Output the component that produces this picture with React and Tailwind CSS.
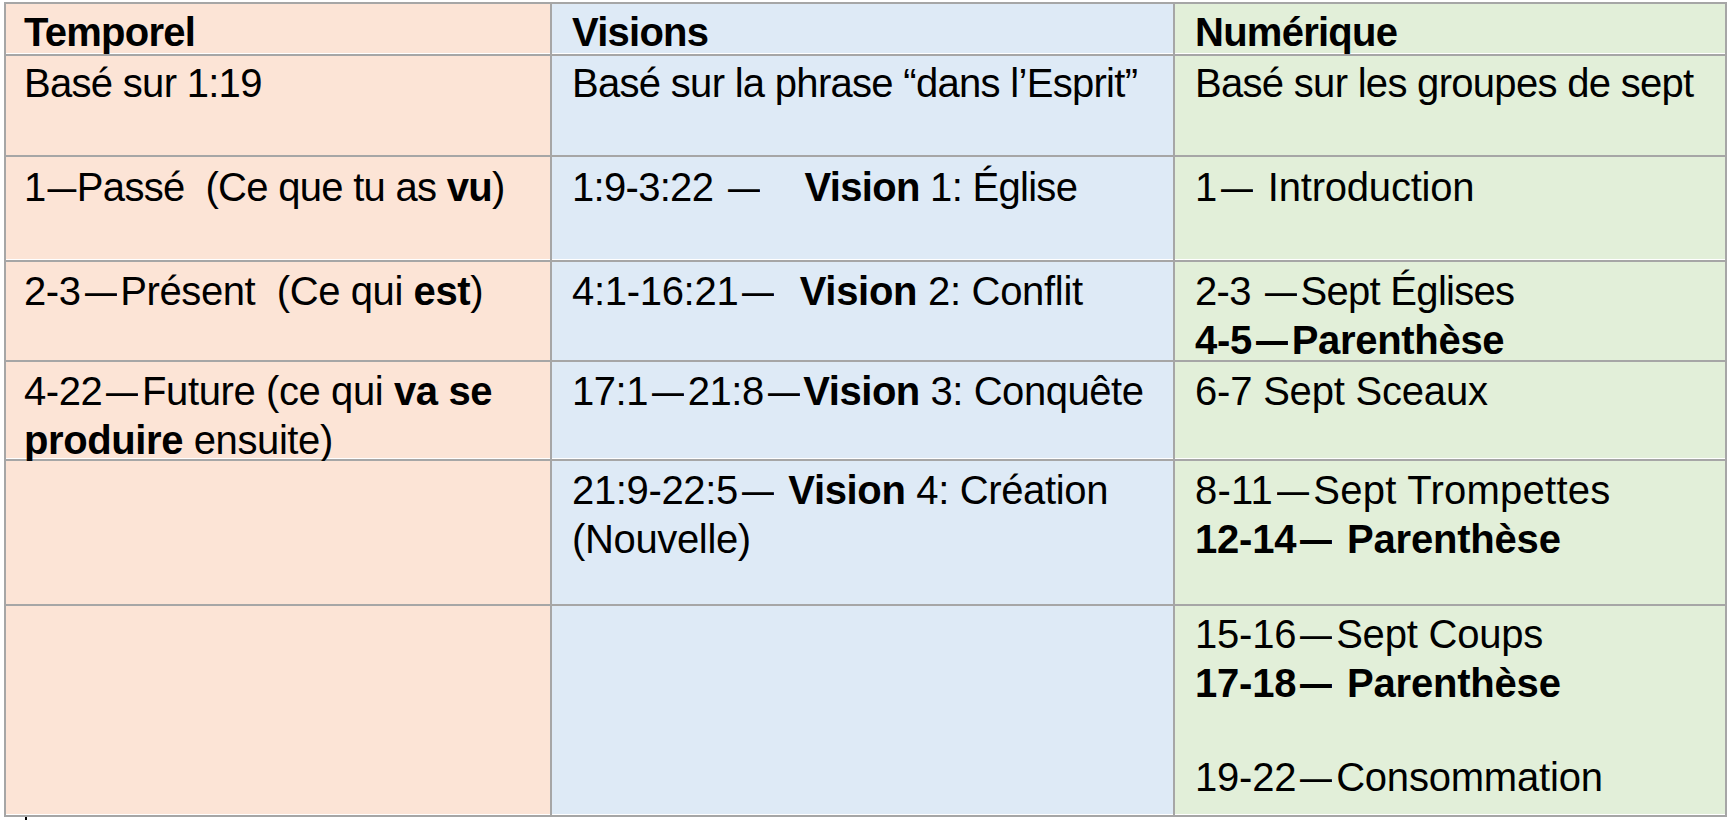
import React from "react";

const B = ({ children }) => <span className="font-bold">{children}</span>;
// narrow dash (advance ~0.8em)
const D = () => (
  <span className="mx-[-0.1em] inline-block scale-x-[0.72]">—</span>
);
// full dash (advance 1em, drawn slightly narrower)
const W = () => <span className="inline-block scale-x-[0.8]">—</span>;

const rows = [
  {
    white: true,
    pt: "pt-[4px]",
    header: true,
    cells: [<B>Temporel</B>, <B>Visions</B>, <B>Numérique</B>],
  },
  {
    pt: "pt-[3px]",
    cells: [
      <>Basé sur 1:19</>,
      <>Basé sur la phrase “dans l’Esprit”</>,
      <>Basé sur les groupes de sept</>,
    ],
  },
  {
    white: true,
    pt: "pt-[6px]",
    cells: [
      <>1<D />Passé{"\u00a0 "}(Ce que tu as <B>vu</B>)</>,
      <>1:9-3:22 <W />{"\u00a0\u00a0\u00a0 "}<B>Vision</B> 1: Église</>,
      <span className="tracking-[-0.2px]">1<W /> Introduction</span>,
    ],
  },
  {
    pt: "pt-[5px]",
    cells: [
      <span className="tracking-[-0.4px]">2-3<W />Présent{"\u00a0 "}(Ce qui <B>est</B>)</span>,
      <span className="tracking-[-0.3px]">4:1-16:21<W />{"\u00a0\u00a0"}<B>Vision</B> 2: Conflit</span>,
      <div className="tracking-[-0.3px]">
        <div className="tracking-[-0.7px]">2-3 <W />Sept Églises</div>
        <div className="font-bold">4-5<W />Parenthèse</div>
      </div>,
    ],
  },
  {
    white: true,
    pt: "pt-[5px]",
    cells: [
      <span className="tracking-[-0.4px]">4-22<W />Future (ce qui <B>va se produire</B> ensuite)</span>,
      <span className="tracking-[-0.45px]">17:1<W />21:8<W /><B>Vision</B> 3: Conquête</span>,
      <span className="tracking-[-0.2px]">6-7 Sept Sceaux</span>,
    ],
  },
  {
    pt: "pt-[5px]",
    cells: [
      <></>,
      <span className="tracking-[-0.35px]">21:9-22:5<W /> <B>Vision</B> 4: Création (Nouvelle)</span>,
      <div className="tracking-[-0.2px]">
        <div className="tracking-[0.25px]">8-11<W />Sept Trompettes</div>
        <div className="font-bold">12-14<W />{"\u00a0"}Parenthèse</div>
      </div>,
    ],
  },
  {
    white: true,
    pt: "pt-[4px]",
    cells: [
      <></>,
      <></>,
      <div className="tracking-[-0.2px]">
        <div>15-16<W />Sept Coups</div>
        <div className="font-bold">17-18<W />{"\u00a0"}Parenthèse</div>
        <div className="h-[45px]" />
        <div>19-22<W />Consommation</div>
      </div>,
    ],
  },
];

const bgs = ["bg-[#FCE4D6]", "bg-[#DEEAF6]", "bg-[#E2EFD9]"];
const pads = ["pl-[18px] pr-[12px]", "pl-[20px] pr-[8px]", "pl-[20px] pr-[8px]"];

export default function App() {
  return (
    <div className="min-h-[820px] bg-white font-['Liberation_Sans',Arial,sans-serif] text-black">
      <div className="ml-[4px] mt-[2px] grid w-[1723px] grid-cols-[546px_623px_552px] grid-rows-[52px_101px_105px_100px_99px_145px_211px] border-l-2 border-t-2 border-[#A6A6A6]">
        {rows.map((row, ri) =>
          row.cells.map((c, ci) => (
            <div
              key={ri + "-" + ci}
              className={
                "border-b-2 border-r-2 border-[#A6A6A6] " +
                bgs[ci] +
                " " +
                pads[ci] +
                " " +
                row.pt +
                " " +
                (row.white ? "shadow-[inset_0_-1px_0_#ffffff] " : "") +
                (row.header
                  ? "text-[40px] leading-[48px] tracking-[-0.75px]"
                  : "text-[40px] leading-[49px] tracking-[-0.7px]")
              }
            >
              {c}
            </div>
          ))
        )}
      </div>
      <div className="ml-[25px] h-[3px] w-[2px] bg-black" />
    </div>
  );
}
